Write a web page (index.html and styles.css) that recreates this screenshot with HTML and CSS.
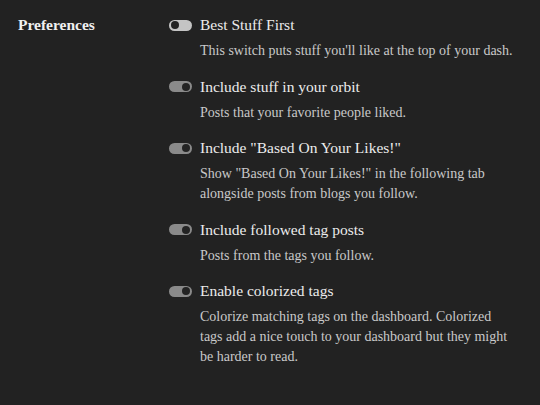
FILE: index.html
```html
<!DOCTYPE html>
<html>
<head>
<meta charset="utf-8">
<link rel="stylesheet" href="styles.css">
</head>
<body>
<div class="section">
  <div class="label">Preferences</div>
  <div class="options">
    <div class="option">
      <div class="row"><span class="toggle off"></span><span class="title">Best Stuff First</span></div>
      <div class="desc">This switch puts stuff you'll like at the top of your dash.</div>
    </div>
    <div class="option">
      <div class="row"><span class="toggle on"></span><span class="title">Include stuff in your orbit</span></div>
      <div class="desc">Posts that your favorite people liked.</div>
    </div>
    <div class="option">
      <div class="row"><span class="toggle on"></span><span class="title">Include "Based On Your Likes!"</span></div>
      <div class="desc">Show "Based On Your Likes!" in the following tab alongside posts from blogs you follow.</div>
    </div>
    <div class="option">
      <div class="row"><span class="toggle on"></span><span class="title">Include followed tag posts</span></div>
      <div class="desc">Posts from the tags you follow.</div>
    </div>
    <div class="option">
      <div class="row"><span class="toggle on"></span><span class="title">Enable colorized tags</span></div>
      <div class="desc">Colorize matching tags on the dashboard. Colorized<br>tags add a nice touch to your dashboard but they might be harder to read.</div>
    </div>
  </div>
</div>
</body>
</html>
```
FILE: styles.css
```css
html, body {
  margin: 0;
  padding: 0;
  background: #222222;
}
body {
  font-family: "Liberation Serif", "DejaVu Serif", serif;
  color: #e6e6e6;
  width: 540px;
  height: 405px;
  overflow: hidden;
}
.section {
  display: flex;
  padding: 15px 0 0 18px;
}
.label {
  width: 151px;
  flex: none;
  font-weight: bold;
  font-size: 15.5px;
  line-height: 20px;
  color: #f0f0f0;
}
.options {
  display: flex;
  flex-direction: column;
  gap: 15.5px;
}
.option {
  display: flex;
  flex-direction: column;
  gap: 6px;
}
.row {
  display: flex;
  align-items: center;
  height: 20px;
}
.toggle {
  position: relative;
  width: 23px;
  height: 11px;
  border-radius: 6px;
  margin-right: 8px;
  flex: none;
}
.toggle::after {
  content: "";
  position: absolute;
  top: 1.5px;
  width: 8px;
  height: 8px;
  border-radius: 50%;
  background: #232323;
}
.toggle.off { background: #c4c4c4; }
.toggle.off::after { left: 2px; }
.toggle.on { background: #8a8a8a; }
.toggle.on::after { right: 2px; }
.title {
  font-size: 15.5px;
  line-height: 20px;
  color: #ececec;
}
.desc {
  margin-left: 31px;
  width: 318px;
  font-size: 14px;
  line-height: 20px;
  color: #c9c9c9;
}
```
